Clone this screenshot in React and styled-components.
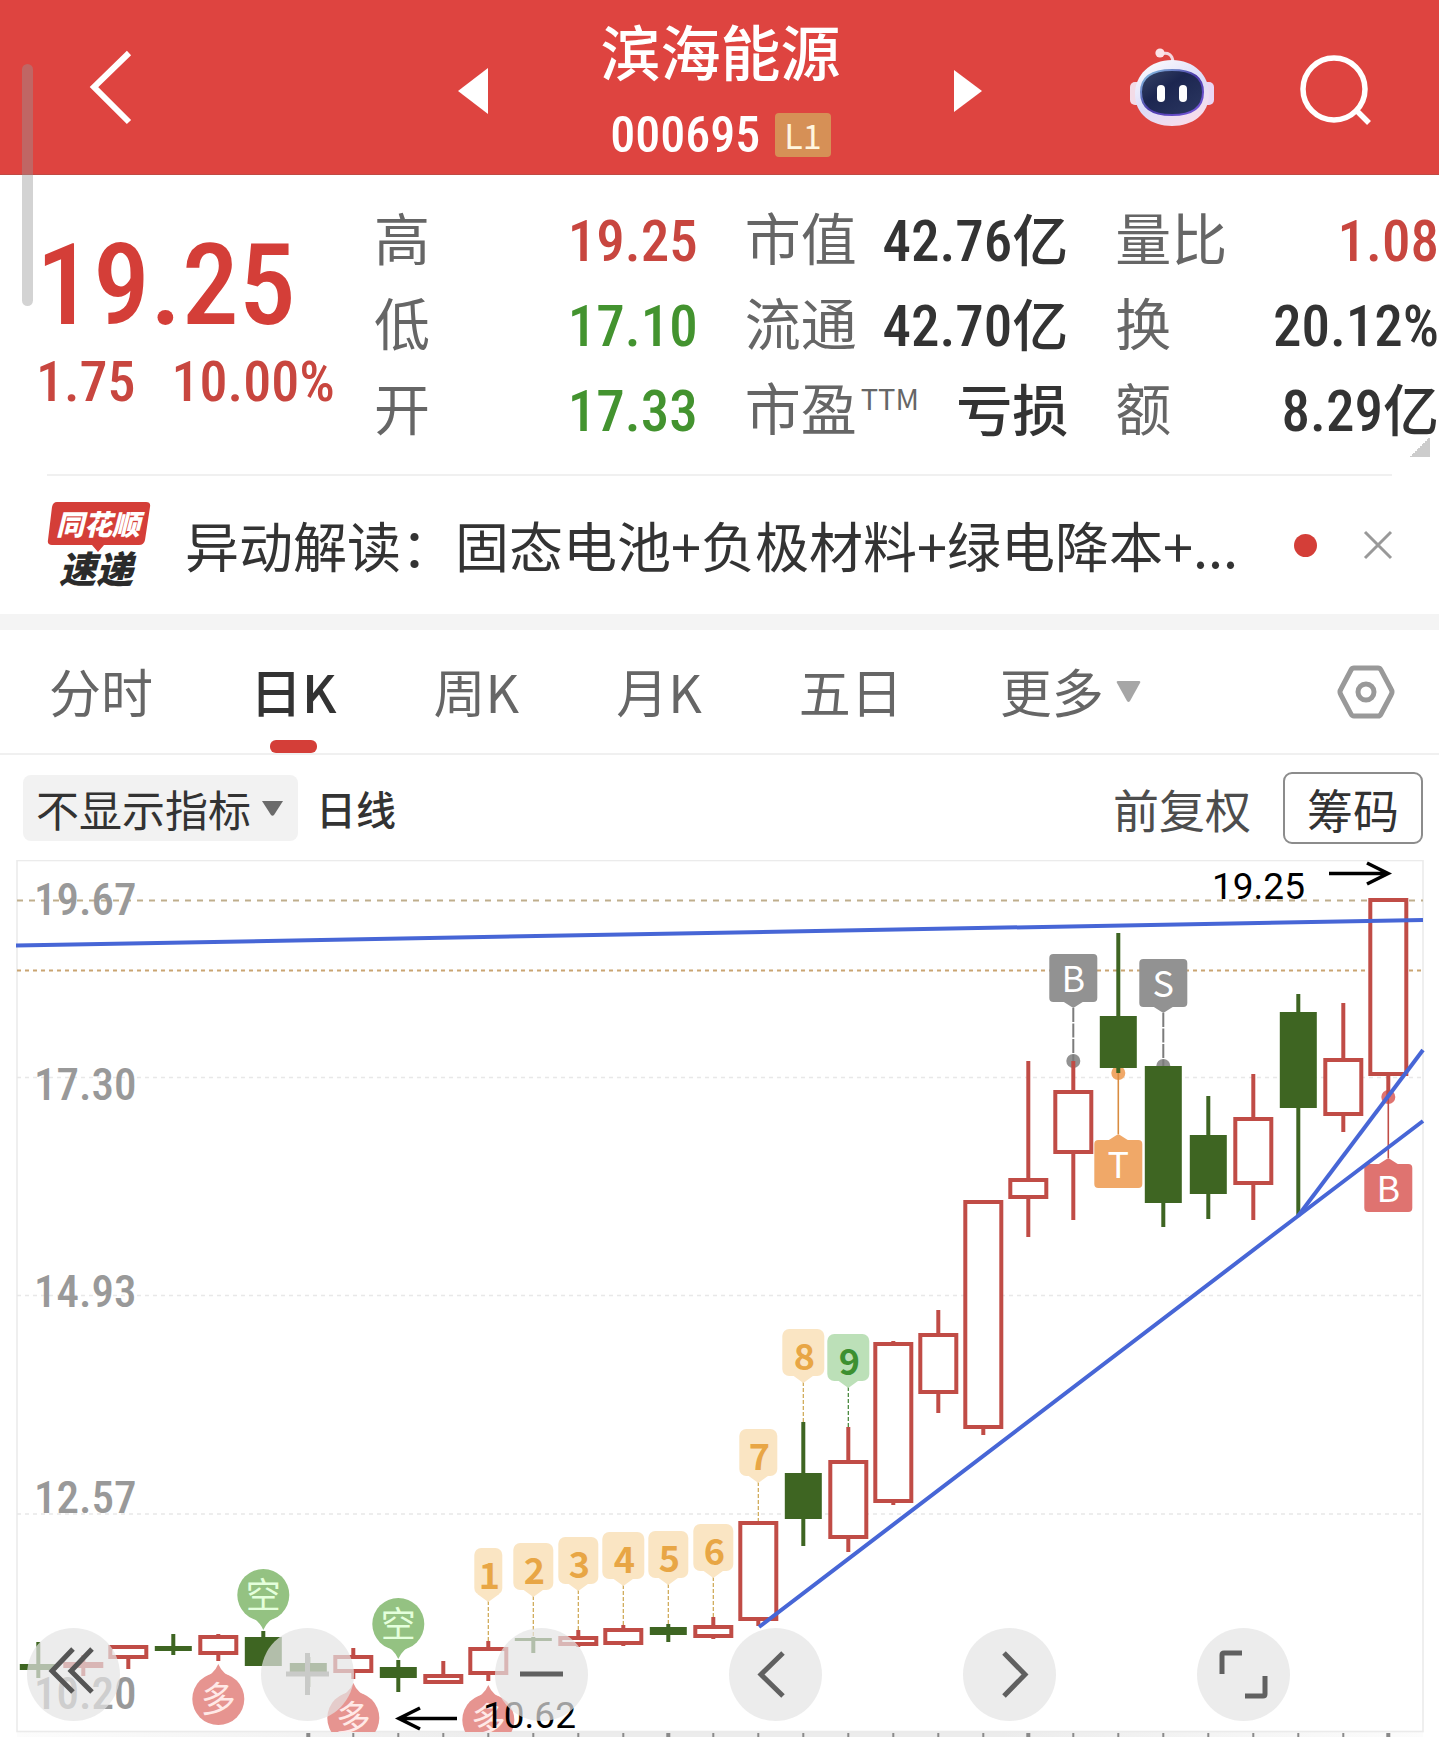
import React from "react";
import styled, { createGlobalStyle, css } from "styled-components";

const CJK = '"Noto Sans CJK SC", "Liberation Sans", sans-serif';
const DIGITS = '"Roboto Condensed", "Noto Sans CJK SC", sans-serif';

const color = {
  brand: "#de4440",
  up: "#d43e38",
  upSoft: "#c8463f",
  down: "#43932f",
  ink: "#333333",
  label: "#666666",
  muted: "#999999",
  line: "#f0f0f0",
  candleUp: "#c04c46",
  candleDown: "#3e6522",
  trend: "#4766d6",
};

const GlobalStyle = createGlobalStyle`
  *, *::before, *::after { box-sizing: border-box; }
  body { margin: 0; background: #fff; color: ${color.ink}; font-family: ${CJK}; }
  h1, p, dl, dd, dt { margin: 0; font-weight: inherit; }
  button, select { font: inherit; color: inherit; }
`;

const Page = styled.main`
  position: relative;
  width: 100%;
`;

const plainButton = css`
  display: inline-flex;
  align-items: center;
  justify-content: center;
  padding: 0;
  border: 0;
  background: none;
  cursor: pointer;
`;

/* ---------- header ---------- */

const Header = styled.header`
  display: grid;
  grid-template-columns: 1fr 524px 1fr;
  align-items: center;
  min-height: 175px;
  background: ${color.brand};
  border-bottom: 1px solid #c04a44;
  color: #fff;
`;

const HeaderSide = styled.div`
  display: flex;
  align-items: center;
  gap: 86px;
  justify-content: ${(p) => (p.$end ? "flex-end" : "flex-start")};
  padding: ${(p) => (p.$end ? "0 67px 0 0" : "0 0 0 88px")};
`;

const StockSwitcher = styled.nav`
  display: flex;
  align-items: center;
  justify-content: space-between;
`;

const IconButton = styled.button`
  ${plainButton}
  flex: none;
`;

const StepButton = styled(IconButton)`
  padding-top: 8px;
`;

const StockTitle = styled.div`
  display: flex;
  flex-direction: column;
  align-items: center;
  gap: 18px;
  font-family: ${DIGITS};
`;

const StockName = styled.h1`
  font-size: 60px;
  line-height: 78px;
  font-weight: 500;
`;

const StockCode = styled.p`
  display: flex;
  align-items: center;
  gap: 15px;
  font-size: 50px;
  line-height: 44px;
  font-weight: 500;
`;

const LevelBadge = styled.span`
  padding: 0 9px;
  border-radius: 4px;
  background: #d69056;
  color: #fff6e0;
  font-family: ${CJK};
  font-size: 34px;
  line-height: 44px;
  font-weight: 400;
`;

/* ---------- quote ---------- */

const Quote = styled.section`
  display: flex;
  padding: 24px 0 20px;
  font-family: ${DIGITS};
  font-weight: 500;
`;

const PriceBlock = styled.div`
  flex: 0 0 374px;
  padding: 28px 0 0 36px;
  color: ${color.up};
`;

const Price = styled.p`
  font-size: 114px;
  line-height: 116px;
`;

const Change = styled.p`
  display: flex;
  gap: 36px;
  color: ${color.upSoft};
  font-size: 56px;
  line-height: 78px;
`;

const Stats = styled.div`
  flex: 1;
  display: grid;
  grid-template-columns: repeat(3, 1fr);
  column-gap: 47px;
`;

const StatRow = styled.dl`
  display: flex;
  justify-content: space-between;
  height: 85px;
  line-height: 85px;
  white-space: nowrap;
`;

const StatLabel = styled.dt`
  color: ${color.label};
  font-size: 56px;
  font-weight: 400;
`;

const Ttm = styled.sup`
  margin-left: 4px;
  font-family: ${CJK};
  font-size: 29px;
  line-height: 0;
`;

const StatValue = styled.dd`
  color: ${(p) => p.$color || color.ink};
  font-size: 57px;
`;

const Unit = styled.span`
  font-size: 56px;
`;

const Corner = styled.span`
  position: absolute;
  top: 437px;
  right: 9px;
  width: 20px;
  height: 20px;
  background: linear-gradient(135deg, transparent 50%, #cccccc 50%);
`;

/* ---------- news ---------- */

const News = styled.section`
  display: flex;
  align-items: center;
  min-height: 140px;
  margin: 0 47px;
  border-top: 2px solid ${color.line};

  svg {
    flex: none;
    overflow: visible;
  }
`;

const Headline = styled.a`
  flex: 1;
  min-width: 0;
  margin-left: 34px;
  color: ${color.ink};
  font-size: 54px;
  line-height: 80px;
  white-space: nowrap;
  text-decoration: none;
`;

const UnreadDot = styled.span`
  width: 23px;
  height: 23px;
  margin: 0 47px;
  border-radius: 50%;
  background: ${color.up};
`;

const Band = styled.div`
  height: 16px;
  background: #f4f4f4;
`;

/* ---------- tabs ---------- */

const Tabs = styled.nav`
  display: flex;
  align-items: stretch;
  gap: 97px;
  padding: 0 44px 0 49px;
  border-bottom: 2px solid ${color.line};
`;

const Tab = styled.button`
  ${plainButton}
  display: grid;
  grid-template-rows: 110px 13px;
  justify-items: center;
  color: ${(p) => (p.$active ? color.ink : color.label)};
  font-size: 52px;
  line-height: 60px;
  font-weight: ${(p) => (p.$active ? 500 : 400)};
  white-space: nowrap;
`;

const TabLabel = styled.span`
  display: flex;
  align-items: center;
  gap: 12px;
  padding-top: 12px;
`;

const Indicator = styled.span`
  width: 47px;
  height: 13px;
  border-radius: 6px;
  background: ${color.up};
`;

const Settings = styled(IconButton)`
  margin-left: auto;
`;

/* ---------- toolbar ---------- */

const Toolbar = styled.div`
  display: flex;
  align-items: center;
  min-height: 105px;
  padding: 0 16px 0 23px;
`;

const SelectBox = styled.label`
  position: relative;
  display: block;
  width: 275px;
  height: 66px;
  border-radius: 8px;
  background: #f2f2f2;

  svg {
    position: absolute;
    right: 15px;
    top: 26px;
    pointer-events: none;
  }
`;

const Select = styled.select`
  appearance: none;
  width: 100%;
  height: 100%;
  padding: 0 0 0 13px;
  border: 0;
  background: none;
  font-size: 43px;
`;

const Period = styled.span`
  margin-left: 18px;
  font-size: 40px;
  font-weight: 500;
`;

const Adjust = styled.button`
  ${plainButton}
  margin-left: auto;
  color: #4d4d4d;
  font-size: 46px;
`;

const Chips = styled.button`
  ${plainButton}
  width: 140px;
  height: 72px;
  margin-left: 32px;
  border: 2px solid #8c8c8c;
  border-radius: 9px;
  font-size: 46px;
  line-height: 60px;
`;

/* ---------- chart ---------- */

const ChartArea = styled.section`
  position: relative;
`;

const ChartSvg = styled.svg`
  display: block;
  width: 100%;
  height: auto;
`;

const Controls = styled.div`
  position: absolute;
  left: 0;
  right: 0;
  bottom: 16px;
  display: flex;
  justify-content: space-between;
  padding: 0 149px 0 27px;
`;

const RoundButton = styled.button`
  ${plainButton}
  width: 93px;
  height: 93px;
  border-radius: 50%;
  background: rgba(228, 228, 228, 0.7);
`;

const ScrollThumb = styled.div`
  position: absolute;
  top: 64px;
  left: 22px;
  width: 11px;
  height: 242px;
  border-radius: 6px;
  background: rgba(150, 150, 150, 0.42);
`;

const STATS = [
  [
    ["高", "19.25", color.upSoft],
    ["低", "17.10", color.down],
    ["开", "17.33", color.down],
  ],
  [
    ["市值", "42.76", null, "亿"],
    ["流通", "42.70", null, "亿"],
    ["市盈", "", null, "亏损", "TTM"],
  ],
  [
    ["量比", "1.08", color.upSoft],
    ["换", "20.12%"],
    ["额", "8.29", null, "亿"],
  ],
];

const TABS = ["分时", "日K", "周K", "月K", "五日", "更多"];

/* kind, body top, body bottom, wick top, wick bottom */
const CANDLES = [
  ["d", 1664, 1670, 1642, 1678],
  ["u", 1662, 1668, 1655, 1676],
  ["u", 1645, 1659, 1645, 1669],
  ["d", 1646, 1651, 1634, 1655],
  ["u", 1635, 1655, 1634, 1661],
  ["d", 1637, 1666, 1631, 1666],
  ["d", 1663, 1672, 1657, 1687],
  ["u", 1655, 1673, 1648, 1679],
  ["d", 1667, 1678, 1660, 1692],
  ["u", 1674, 1684, 1661, 1684],
  ["u", 1647, 1675, 1641, 1681],
  ["d", 1638, 1641, 1637, 1653],
  ["u", 1636, 1646, 1630, 1647],
  ["u", 1628, 1645, 1625, 1646],
  ["d", 1627, 1635, 1624, 1642],
  ["u", 1625, 1638, 1617, 1639],
  ["u", 1521, 1621, 1521, 1626],
  ["d", 1473, 1519, 1422, 1546],
  ["u", 1460, 1539, 1427, 1552],
  ["u", 1342, 1503, 1341, 1505],
  ["u", 1333, 1394, 1310, 1413],
  ["u", 1200, 1429, 1200, 1435],
  ["u", 1178, 1199, 1061, 1237],
  ["u", 1090, 1154, 1061, 1220],
  ["d", 1016, 1068, 933, 1073],
  ["d", 1066, 1203, 1066, 1227],
  ["d", 1135, 1194, 1096, 1219],
  ["u", 1117, 1185, 1074, 1220],
  ["d", 1012, 1108, 994, 1216],
  ["u", 1058, 1116, 1003, 1132],
  ["u", 898, 1076, 898, 1097],
];

const candleX = (i) => 38.3 + i * 45;

/* label, candle index, top, width, wick top */
const COUNTS = [
  ["1", 10, 1548, 28, 1641],
  ["2", 11, 1543, 40, 1637],
  ["3", 12, 1537, 40, 1630],
  ["4", 13, 1532, 42, 1625],
  ["5", 14, 1531, 40, 1624],
  ["6", 15, 1524, 40, 1617],
  ["7", 16, 1429, 38, 1521],
  ["8", 17, 1329, 42, 1422],
  ["9", 18, 1334, 42, 1427],
];

const AXIS = [
  ["19.67", 915],
  ["17.30", 1100],
  ["14.93", 1307],
  ["12.57", 1513],
  ["10.20", 1709],
];

function Candle({ x, kind, top, bottom, high, low }) {
  const c = kind === "u" ? color.candleUp : color.candleDown;
  return (
    <g stroke={c} strokeWidth="4">
      {high < top && <line x1={x} x2={x} y1={high} y2={top + 1} />}
      {low > bottom && <line x1={x} x2={x} y1={bottom - 1} y2={low} />}
      {kind === "u" ? (
        <rect x={x - 18} y={top + 2} width="36" height={Math.max(bottom - top - 4, 2)} fill="#fff" />
      ) : (
        <rect x={x - 18.5} y={top} width="37" height={bottom - top} fill={c} stroke="none" />
      )}
    </g>
  );
}

function CountFlag({ label, x, top, width, wick }) {
  const green = label === "9";
  const fill = green ? "#bce0b8" : "#fae5c3";
  return (
    <g>
      <line x1={x} x2={x} y1={top + 53} y2={wick} stroke={green ? "#3c8030" : "#cda54e"} strokeWidth="1.2" strokeDasharray="4 2" />
      <rect x={x - width / 2} y={top} width={width} height="47" rx="7" fill={fill} />
      <path d={`M${x - 11} ${top + 46} L${x} ${top + 54} L${x + 11} ${top + 46} Z`} fill={fill} />
      <text x={x + 1} y={top + 41} textAnchor="middle" fontSize="36" fontWeight="700" fontFamily={CJK} fill={green ? "#3c9030" : "#e8a645"}>
        {label}
      </text>
    </g>
  );
}

function TradeFlag({ label, x, top, fill, dotY, up, solid }) {
  const tip = up ? top - 6 : top + 54;
  const base = up ? top + 1 : top + 47;
  return (
    <g>
      <circle cx={x} cy={dotY} r="7" fill={fill} />
      <line x1={x} x2={x} y1={tip} y2={dotY} stroke={solid || fill} strokeWidth={up ? 1.6 : 2} strokeDasharray={up ? undefined : "14 1.5"} />
      <rect x={x - 24} y={top} width="48" height="48" rx="4" fill={fill} />
      <path d={`M${x - 11} ${base} L${x} ${tip} L${x + 11} ${base} Z`} fill={fill} />
      <text x={x} y={top + 38} textAnchor="middle" fontSize="36" fontFamily={CJK} fill="#fff">
        {label}
      </text>
    </g>
  );
}

function Pin({ label, x, cy, fill, ink, up }) {
  const s = up ? -1 : 1;
  return (
    <g>
      <circle cx={x} cy={cy} r="26" fill={fill} />
      <path d={`M${x - 17} ${cy + s * 19} Q${x - 4} ${cy + s * 25} ${x} ${cy + s * 35} Q${x + 4} ${cy + s * 25} ${x + 17} ${cy + s * 19} Z`} fill={fill} />
      <text x={x} y={cy + 13} textAnchor="middle" fontSize="35" fontFamily={CJK} fill={ink}>
        {label}
      </text>
    </g>
  );
}

function Chart() {
  return (
    <ChartSvg viewBox="0 860 1439 877" role="img" aria-label="日K 走势图">
      <defs>
        <clipPath id="plot">
          <rect x="16" y="860" width="1408" height="872" />
        </clipPath>
        <linearGradient id="axis" x1="0" x2="1" y1="0" y2="0">
          <stop offset="0" stopColor="#fcfcfc" />
          <stop offset="0.35" stopColor="#ececec" />
          <stop offset="0.7" stopColor="#ececec" />
          <stop offset="1" stopColor="#fcfcfc" />
        </linearGradient>
      </defs>
      <rect x="17" y="1732" width="1406" height="5" fill="url(#axis)" />
      <rect x="17" y="860.5" width="1406" height="871" fill="none" stroke="#ebebeb" strokeWidth="1.6" />
      {[1077.5, 1295.5, 1514].map((y) => (
        <line key={y} x1="17" x2="1423" y1={y} y2={y} stroke="#e8e8e8" strokeWidth="1.5" strokeDasharray="4 4" />
      ))}
      <line x1="17" x2="1423" y1="900.5" y2="900.5" stroke="#bfae8c" strokeWidth="2" strokeDasharray="6 6" />
      <line x1="17" x2="1423" y1="970.5" y2="970.5" stroke="#c9a471" strokeWidth="2" strokeDasharray="4 4" />
      {AXIS.map(([t, y]) => (
        <text key={t} x="34" y={y} fontSize="45" fontWeight="500" fontFamily={DIGITS} fill="#999">
          {t}
        </text>
      ))}

      <TradeFlag label="B" x={candleX(23)} top={954} fill="#929292" dotY={1061} solid="#7c7c7c" />
      <TradeFlag label="S" x={candleX(25)} top={959} fill="#929292" dotY={1066} solid="#7c7c7c" />
      <TradeFlag label="T" x={candleX(24)} top={1140} fill="#f0a868" dotY={1073} solid="#d98c40" up />
      <TradeFlag label="B" x={candleX(30)} top={1164} fill="#df7370" dotY={1097} solid="#c04c46" up />

      {CANDLES.map(([kind, top, bottom, high, low], i) => (
        <Candle key={i} x={candleX(i)} kind={kind} top={top} bottom={bottom} high={high} low={low} />
      ))}
      {COUNTS.map(([label, i, top, width, wick]) => (
        <CountFlag key={label} label={label} x={candleX(i)} top={top} width={width} wick={wick} />
      ))}

      <g clipPath="url(#plot)">
        <Pin label="空" x={candleX(5)} cy={1595} fill="#94c282" ink="#e4ffdc" />
        <Pin label="空" x={candleX(8)} cy={1624} fill="#94c282" ink="#e4ffdc" />
        <Pin label="多" x={candleX(4)} cy={1699} fill="#e69490" ink="#ffe9e7" up />
        <Pin label="多" x={candleX(7)} cy={1718} fill="#e69490" ink="#ffe9e7" up />
        <Pin label="多" x={candleX(10)} cy={1720} fill="#e69490" ink="#ffe9e7" up />
      </g>

      <g stroke={color.trend} strokeWidth="4" fill="none">
        <path d="M16 945.5 L1423 920" />
        <path d="M759 1627 L1298 1216 L1423 1121" />
        <path d="M1298 1216 L1423 1050" />
      </g>

      <g stroke="#000" strokeWidth="3.6" fill="none">
        <path d="M1329 873.5 H1388 M1367 863 L1388 873.5 L1367 884" />
        <path d="M457 1718.5 H399 M420 1708 L399 1718.5 L420 1729" />
      </g>
      <g fontFamily="Roboto, sans-serif" fontSize="37" fill="#000">
        <text x="1212" y="899">19.25</text>
        <text x="483" y="1728">10.62</text>
      </g>

      {CANDLES.map((_, i) =>
        i >= 6 ? (
          <line key={i} x1={candleX(i)} x2={candleX(i)} y1="1733" y2="1737" stroke="#8a8a8a" strokeWidth={i % 8 === 6 ? 4 : 2} />
        ) : null
      )}
    </ChartSvg>
  );
}

function Robot() {
  return (
    <svg width="84" height="79" viewBox="0 0 84 79" aria-hidden="true">
      <defs>
        <linearGradient id="shell" x1="0" y1="0" x2="0.6" y2="1">
          <stop offset="0" stopColor="#ffffff" />
          <stop offset="0.6" stopColor="#dcdcf8" />
          <stop offset="1" stopColor="#f6dcec" />
        </linearGradient>
        <linearGradient id="visor" x1="0" y1="0" x2="1" y2="1">
          <stop offset="0" stopColor="#3a4668" />
          <stop offset="0.4" stopColor="#1c2650" />
          <stop offset="1" stopColor="#2c3862" />
        </linearGradient>
        <linearGradient id="rim" x1="0" y1="0" x2="1" y2="1">
          <stop offset="0" stopColor="#8fd0ea" />
          <stop offset="0.5" stopColor="#4a3aa8" />
          <stop offset="1" stopColor="#7a5ae0" />
        </linearGradient>
      </defs>
      <path d="M31 6 Q42 3 43 14" fill="none" stroke="#f4d6de" strokeWidth="3" />
      <circle cx="30" cy="5" r="4.6" fill="#fbe3e8" />
      <rect x="0" y="34" width="12" height="23" rx="5" fill="#f3dbe6" />
      <rect x="72" y="34" width="12" height="23" rx="5" fill="#ead6f4" />
      <path d="M42 12 C64 12 79 27 79 46 C79 66 63 78 42 78 C21 78 5 66 5 46 C5 27 20 12 42 12 Z" fill="url(#shell)" />
      <path d="M42 22 C62 22 73 29 73 44 C73 60 62 67 42 67 C22 67 11 60 11 44 C11 29 22 22 42 22 Z" fill="url(#visor)" stroke="url(#rim)" strokeWidth="2" />
      <rect x="27" y="37" width="8" height="17" rx="4" fill="#fff" />
      <rect x="49" y="37" width="8" height="17" rx="4" fill="#fff" />
    </svg>
  );
}

function NewsLogo() {
  return (
    <svg width="104" height="86" viewBox="0 0 104 86" role="img" aria-label="同花顺速递">
      <path d="M10 0 H99 Q104 0 103 5 L98 38 Q97 43 92 43 H57 L51 50 L45 43 H5 Q0 43 1 38 L5 5 Q6 0 10 0 Z" fill={color.up} />
      <g fontFamily={CJK} fontStyle="italic" fontWeight="900">
        <text x="51" y="33" textAnchor="middle" fontSize="28" fill="#fff">
          同花顺
        </text>
        <text x="49" y="81" textAnchor="middle" fontSize="37" fill="#2b2b2b">
          速递
        </text>
      </g>
    </svg>
  );
}

const CONTROLS = [
  ["最早", "M46 21 L25 43 L46 64 M65 21 L44 43 L65 64", "#555"],
  ["放大", "M25 46 H68 M46.5 25 V67", "#c9cac8"],
  ["缩小", "M25 46 H68", "#606060"],
  ["向左", "M54 25 L32 46.5 L54 68", "#606060"],
  ["向右", "M41 25 L62 46.5 L41 68", "#606060"],
  ["全屏", "M25 46 V27 Q25 25 27 25 H45 M48 68 H66 Q68 68 68 66 V48", "#606060"],
];

export default function App() {
  return (
    <>
      <GlobalStyle />
      <Page>
        <Header>
          <HeaderSide>
            <IconButton aria-label="返回">
              <svg width="46" height="76" viewBox="0 0 46 76" fill="none">
                <path d="M41 4 L6 38 L41 73" stroke="#fff" strokeWidth="6" />
              </svg>
            </IconButton>
          </HeaderSide>
          <StockSwitcher aria-label="切换股票">
            <StepButton aria-label="上一只">
              <svg width="30" height="46" viewBox="0 0 30 46">
                <path d="M30 0 V46 L0 23 Z" fill="#fff" />
              </svg>
            </StepButton>
            <StockTitle>
              <StockName>滨海能源</StockName>
              <StockCode>
                000695 <LevelBadge>L1</LevelBadge>
              </StockCode>
            </StockTitle>
            <StepButton aria-label="下一只">
              <svg width="28" height="42" viewBox="0 0 28 42">
                <path d="M0 0 V42 L28 21 Z" fill="#fff" />
              </svg>
            </StepButton>
          </StockSwitcher>
          <HeaderSide $end>
            <IconButton aria-label="智能助手">
              <Robot />
            </IconButton>
            <IconButton aria-label="搜索">
              <svg width="72" height="80" viewBox="0 -8 72 80" fill="none" stroke="#fff" strokeWidth="5.5">
                <circle cx="34" cy="34" r="31" />
                <path d="M56 55 L69 68" />
              </svg>
            </IconButton>
          </HeaderSide>
        </Header>

        <Quote>
          <PriceBlock>
            <Price>19.25</Price>
            <Change>
              <span>1.75</span>
              <span>10.00%</span>
            </Change>
          </PriceBlock>
          <Stats>
            {STATS.map((col, i) => (
              <div key={i}>
                {col.map(([label, value, tone, unit, sup]) => (
                  <StatRow key={label}>
                    <StatLabel>
                      {label}
                      {sup && <Ttm>{sup}</Ttm>}
                    </StatLabel>
                    <StatValue $color={tone}>
                      {value}
                      {unit && <Unit>{unit}</Unit>}
                    </StatValue>
                  </StatRow>
                ))}
              </div>
            ))}
          </Stats>
          <Corner />
        </Quote>

        <News>
          <NewsLogo />
          <Headline href="#news">异动解读：固态电池+负极材料+绿电降本+...</Headline>
          <UnreadDot />
          <IconButton aria-label="关闭">
            <svg width="28" height="28" viewBox="0 0 28 28" stroke="#999" strokeWidth="3">
              <path d="M1 1 L27 27 M27 1 L1 27" />
            </svg>
          </IconButton>
        </News>

        <Band />

        <Tabs>
          {TABS.map((t) => (
            <Tab key={t} $active={t === "日K"}>
              <TabLabel>
                {t}
                {t === "更多" && (
                  <svg width="25" height="21" viewBox="0 0 25 21">
                    <path d="M2 0 H23 Q25 0 24 2 L14 20 Q12.500 22 11 20 L1 2 Q0 0 2 0 Z" fill="#a6a6a6" />
                  </svg>
                )}
              </TabLabel>
              {t === "日K" && <Indicator />}
            </Tab>
          ))}
          <Settings aria-label="设置">
            <svg width="58" height="56" viewBox="0 0 58 56" fill="none" stroke="#999" strokeWidth="5">
              <path d="M17 4 H41 Q43 4 44 6 L54 25 Q56 28 54 31 L44 50 Q43 52 41 52 H17 Q15 52 14 50 L4 31 Q2 28 4 25 L14 6 Q15 4 17 4 Z" />
              <circle cx="29" cy="28" r="8" />
            </svg>
          </Settings>
        </Tabs>

        <Toolbar>
          <SelectBox>
            <Select aria-label="指标" defaultValue="none">
              <option value="none">不显示指标</option>
            </Select>
            <svg width="21" height="15" viewBox="0 0 21 15">
              <path d="M0 0 H21 L12 14 Q10.500 15.500 9 14 Z" fill="#6b6b6b" />
            </svg>
          </SelectBox>
          <Period>日线</Period>
          <Adjust>前复权</Adjust>
          <Chips>筹码</Chips>
        </Toolbar>

        <ChartArea>
          <Chart />
          <Controls>
            {CONTROLS.map(([label, d, stroke]) => (
              <RoundButton key={label} aria-label={label}>
                <svg width="93" height="93" viewBox="0 0 93 93" fill="none" stroke={stroke} strokeWidth="5">
                  <path d={d} />
                </svg>
              </RoundButton>
            ))}
          </Controls>
        </ChartArea>
        <ScrollThumb />
      </Page>
    </>
  );
}
